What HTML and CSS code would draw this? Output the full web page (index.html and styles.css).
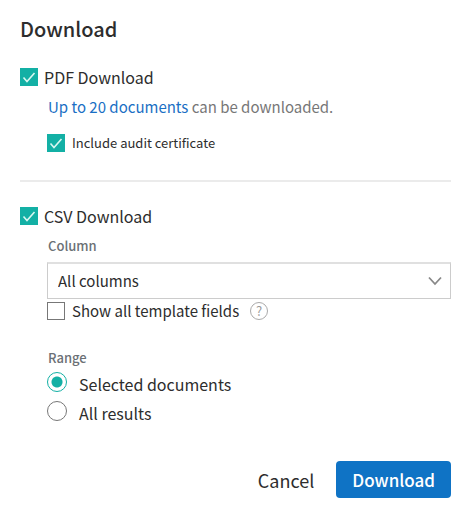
FILE: index.html
```html
<!DOCTYPE html>
<html lang="en">
<head>
<meta charset="utf-8">
<meta name="viewport" content="width=device-width, initial-scale=1">
<title>Download</title>
<link rel="stylesheet" href="styles.css">
</head>
<body>
<form class="dialog">
  <h1 class="title">Download</h1>
  <section class="section">
    <label class="option option-main"><input class="check" type="checkbox" checked><span>PDF Download</span></label>
    <div class="details">
      <p class="note"><a class="link" href="#">Up to 20 documents</a> can be downloaded.</p>
      <label class="option option-small"><input class="check" type="checkbox" checked><span>Include audit certificate</span></label>
    </div>
  </section>
  <hr class="divider">
  <section class="section">
    <label class="option option-main"><input class="check" type="checkbox" checked><span>CSV Download</span></label>
    <div class="details details-fields">
      <label class="caption" for="column">Column</label>
      <div class="select-wrap">
        <select class="select" id="column"><option>All columns</option></select>
        <svg class="chevron" viewBox="0 0 14 10" aria-hidden="true"><path d="M1 1.5 7 8l6-6.5"/></svg>
      </div>
      <div class="field-row">
        <label class="option"><input class="check" type="checkbox"><span>Show all template fields</span></label>
        <button class="help" type="button">?</button>
      </div>
      <fieldset class="range">
        <legend class="caption">Range</legend>
        <label class="choice"><input class="radio" type="radio" name="range" checked><span>Selected documents</span></label>
        <label class="choice"><input class="radio" type="radio" name="range"><span>All results</span></label>
      </fieldset>
    </div>
  </section>
  <div class="actions">
    <button class="button button-plain" type="button">Cancel</button>
    <button class="button button-primary" type="submit">Download</button>
  </div>
</form>
</body>
</html>
```
FILE: styles.css
```css
* {
  box-sizing: border-box;
}

body {
  margin: 0;
  background: #fff;
  color: #2d2d2d;
  font: 15px/24px "Noto Sans CJK SC", "Noto Sans", sans-serif;
}

button,
select {
  font: inherit;
  color: inherit;
}

.dialog {
  padding: 15px 21px 18px 20px;
}

.title {
  margin: 0 0 22px;
  font-size: 20px;
  line-height: 28px;
  font-weight: 500;
}

.section {
  display: flex;
  flex-direction: column;
  gap: 6px;
}

.option {
  display: flex;
  align-items: center;
  gap: 7px;
}

.option-main {
  gap: 6px;
  font-size: 16px;
}

.option-small {
  font-size: 13px;
}

.details {
  display: flex;
  flex-direction: column;
  margin-left: 27px;
}

.details-fields {
  padding-top: 2px;
}

.check {
  appearance: none;
  flex: none;
  width: 18px;
  height: 18px;
  margin: 0;
  border: 1px solid #777;
  background: #fff;
}

.check:checked {
  border: 0;
  background: #13b0a5 url("data:image/svg+xml,%3Csvg xmlns='http://www.w3.org/2000/svg' viewBox='0 0 18 18'%3E%3Cpath d='M3.5 9.5l3.5 4 7.5-8.5' fill='none' stroke='%23d9f7f1' stroke-width='1.6'/%3E%3C/svg%3E");
}

.note {
  margin: 0 0 12px 1px;
  color: #777;
}

.link {
  color: #1a6fc4;
  text-decoration: none;
}

.divider {
  width: 100%;
  height: 2px;
  margin: 25px 0 22px;
  border: 0;
  background: #ebebeb;
}

.caption {
  padding: 0 1px;
  color: #6b7075;
  font-size: 13px;
  line-height: 20px;
  font-weight: 500;
}

.select-wrap {
  display: grid;
  align-items: center;
  margin-top: 6px;
}

.select {
  grid-area: 1 / 1;
  appearance: none;
  width: 100%;
  height: 37px;
  padding: 0 40px 0 10px;
  border: 1px solid #ccc;
  border-top: 2px solid #e0e0e0;
  border-radius: 0;
  background: #fff;
}

.chevron {
  grid-area: 1 / 1;
  justify-self: end;
  width: 14px;
  height: 10px;
  margin-right: 9px;
  fill: none;
  stroke: #888;
  stroke-width: 1.8;
  pointer-events: none;
}

.field-row {
  display: flex;
  align-items: center;
  gap: 11px;
}

.help {
  width: 18px;
  height: 18px;
  padding: 0;
  border: 1px solid #aaa;
  border-radius: 50%;
  background: #fff;
  color: #999;
  font-size: 13px;
  line-height: 16px;
}

.range {
  min-width: 0;
  margin: 25px 0 0;
  padding: 0;
  border: 0;
}

.choice {
  display: flex;
  gap: 12px;
  height: 29px;
  padding-top: 4px;
  font-size: 16px;
}

.radio {
  appearance: none;
  flex: none;
  width: 20px;
  height: 20px;
  margin: 0;
  border: 1px solid #777;
  border-radius: 50%;
}

.radio:checked {
  border-color: #13b0a5;
  background: radial-gradient(circle, #13b0a5 5px, transparent 6px);
}

.actions {
  display: flex;
  justify-content: flex-end;
  gap: 6px;
  margin-top: 35px;
}

.button {
  height: 37px;
  padding: 0 16px;
  border: 0;
  border-radius: 4px;
  background: none;
  font-size: 17px;
}

.button-plain {
  font-size: 18px;
}

.button-primary {
  background: #0f73c5;
  color: #fff;
  font-weight: 500;
}
```
